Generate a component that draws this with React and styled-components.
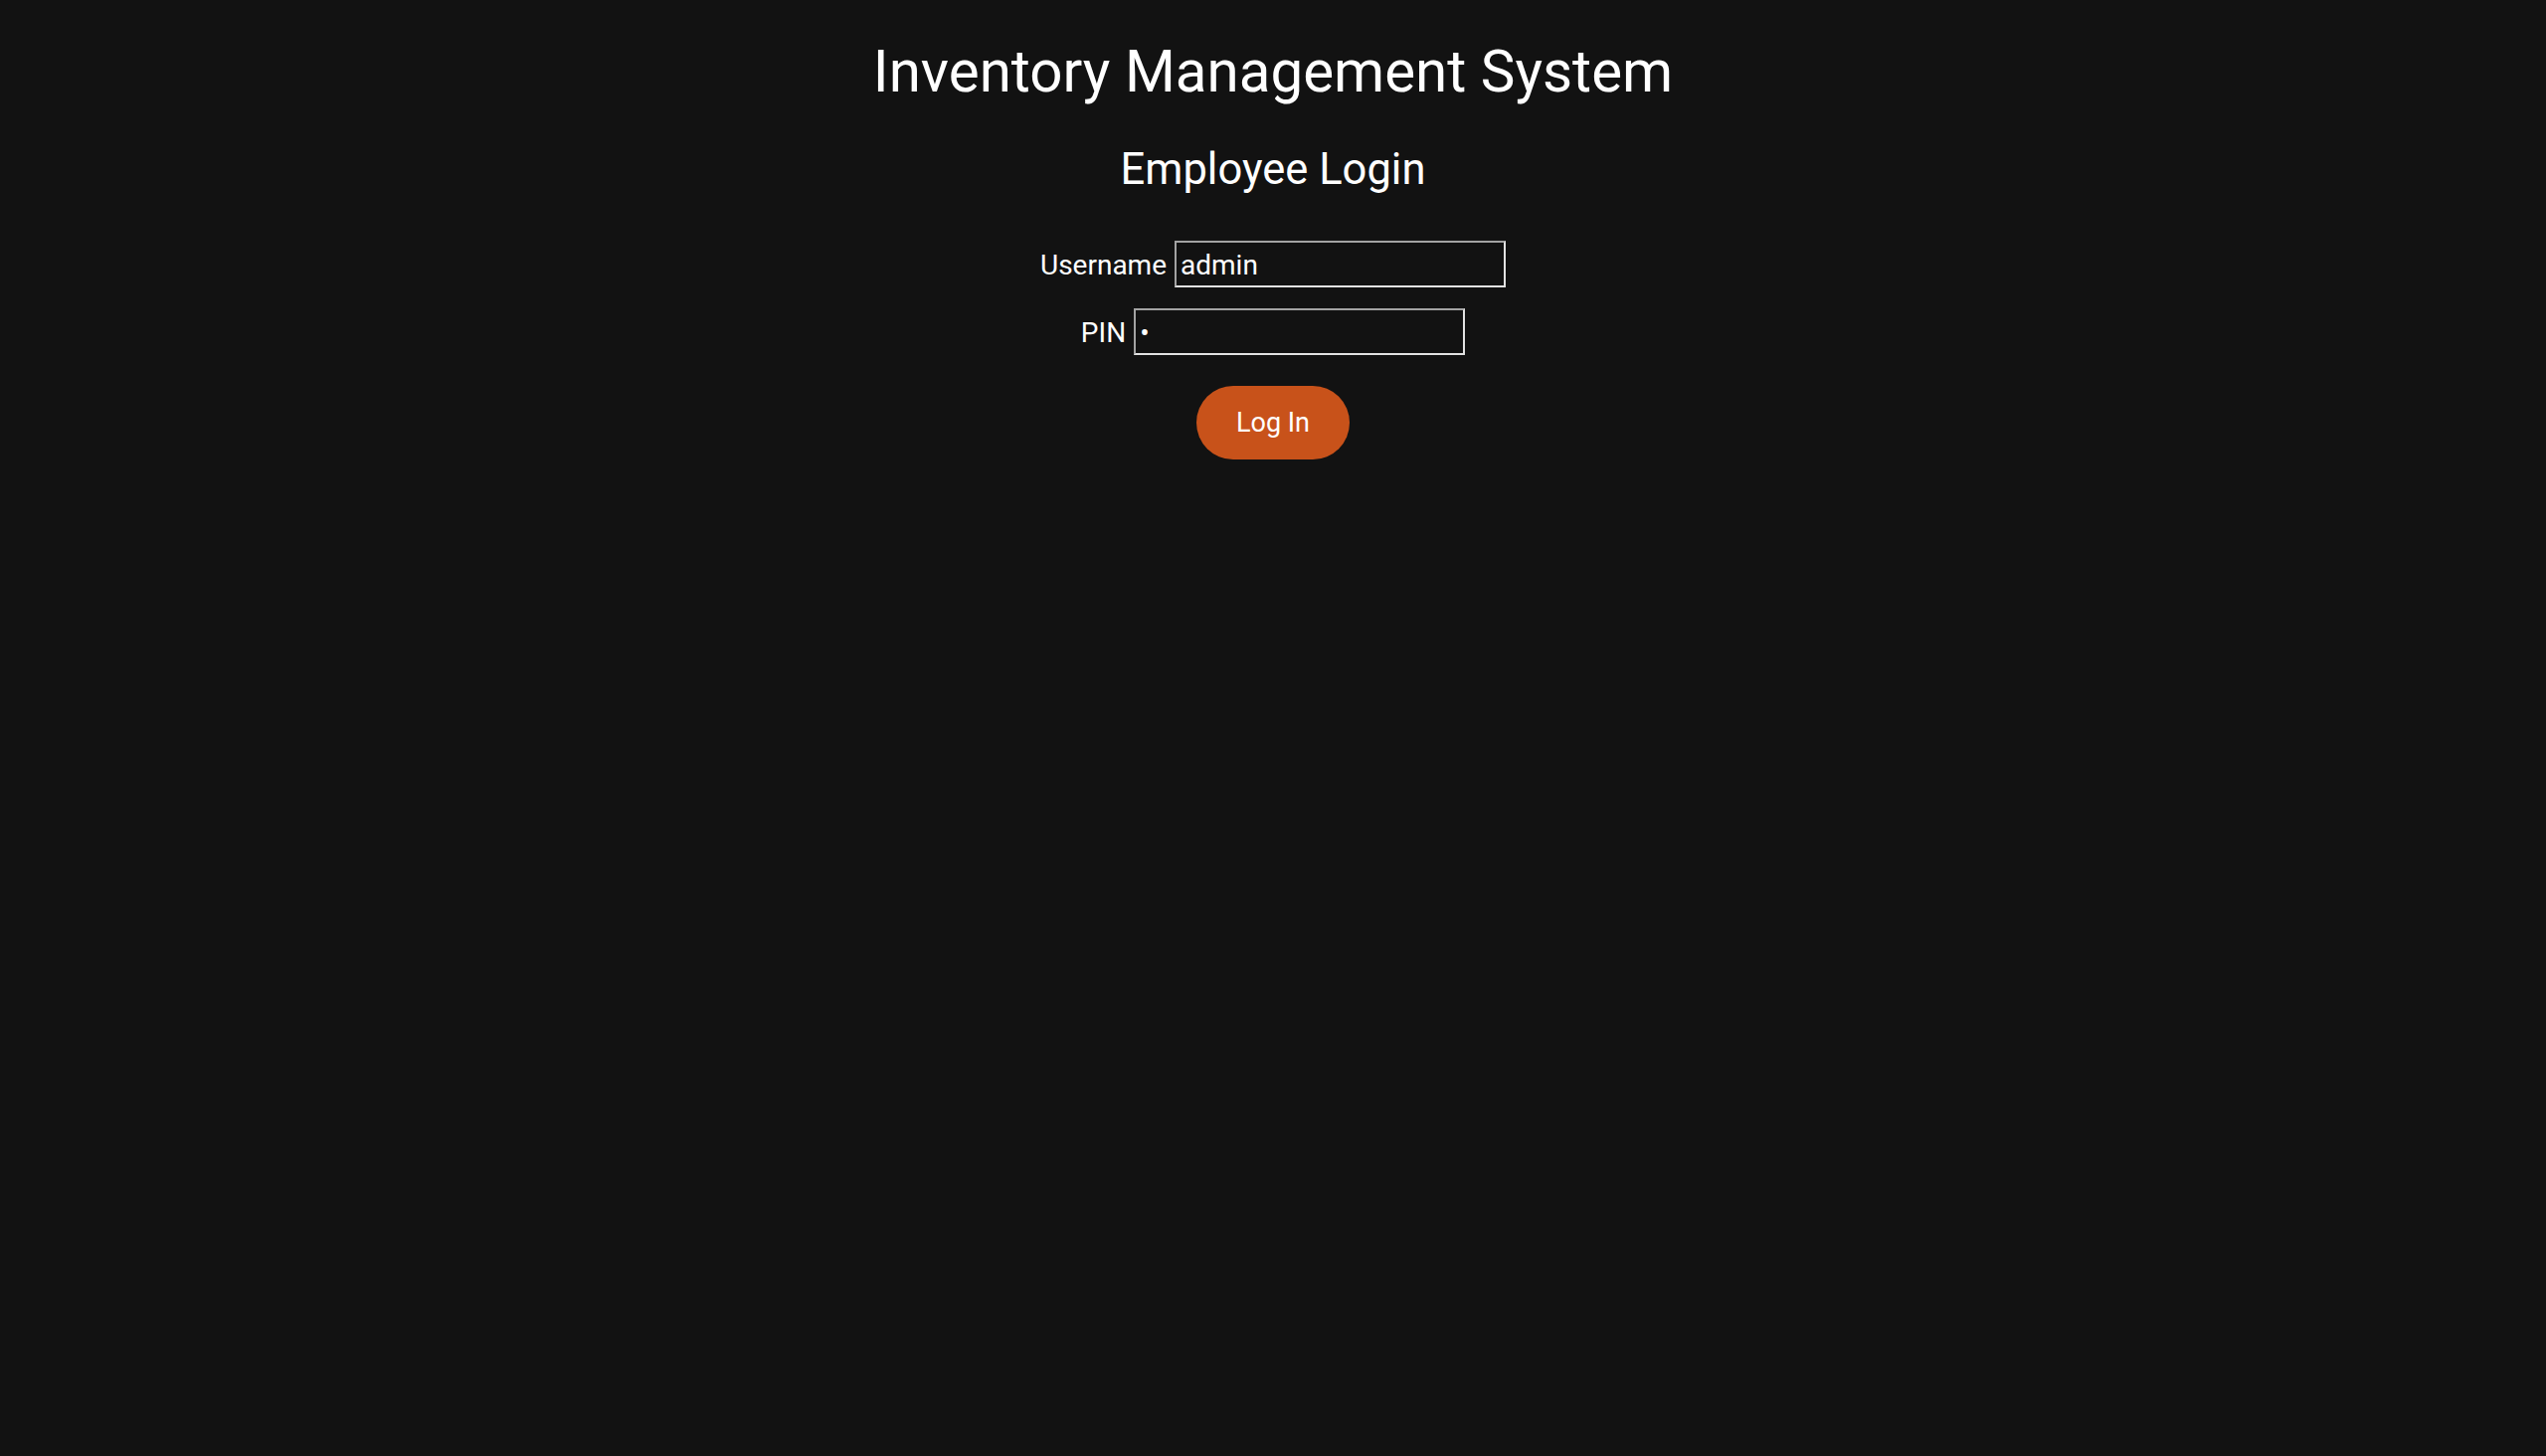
import React, { useState } from "react";
import styled, { createGlobalStyle } from "styled-components";

const GlobalStyle = createGlobalStyle`
  html, body {
    margin: 0;
    padding: 0;
    background: #121212;
  }
  body {
    font-family: Roboto, "Liberation Sans", sans-serif;
    color: #ffffff;
  }
`;

const Page = styled.main`
  min-height: 100vh;
  box-sizing: border-box;
  padding-top: 38px;
  display: flex;
  flex-direction: column;
  align-items: center;
  background: #121212;
`;

const Title = styled.h1`
  margin: 0;
  font-size: 58.3px;
  font-weight: 400;
  line-height: normal;
  color: #ffffff;
`;

const Subtitle = styled.h2`
  margin: 39px 0 0;
  font-size: 43.5px;
  font-weight: 400;
  line-height: normal;
  color: #ffffff;
`;

const Form = styled.form`
  margin-top: 46px;
  display: flex;
  flex-direction: column;
  align-items: center;
  gap: 21px;
`;

const Row = styled.div`
  display: flex;
  align-items: baseline;
  justify-content: center;
  gap: 8px;
`;

const Label = styled.label`
  font-size: 28px;
  color: #ffffff;
`;

const Input = styled.input`
  box-sizing: border-box;
  width: 333px;
  height: 47px;
  padding: 1px 4px 0;
  font-family: Roboto, "Liberation Sans", sans-serif;
  font-size: 28px;
  color: #ffffff;
  background: transparent;
  border-width: 2px;
  border-style: solid;
  border-color: #a3a3a3 #e2e2e2 #e2e2e2 #a3a3a3;
  border-radius: 0;
  outline: none;
`;

const Button = styled.button`
  margin-top: 10px;
  width: 154px;
  height: 74px;
  padding: 0;
  border: none;
  border-radius: 37px;
  background: #c8521a;
  color: #ffffff;
  font-family: Roboto, "Liberation Sans", sans-serif;
  font-size: 27px;
  cursor: pointer;
`;

export default function App() {
  const [username, setUsername] = useState("admin");
  const [pin, setPin] = useState("1");
  return (
    <>
      <GlobalStyle />
      <Page>
        <Title>Inventory Management System</Title>
        <Subtitle>Employee Login</Subtitle>
        <Form onSubmit={(e) => e.preventDefault()}>
          <Row>
            <Label htmlFor="username">Username</Label>
            <Input
              id="username"
              type="text"
              value={username}
              onChange={(e) => setUsername(e.target.value)}
            />
          </Row>
          <Row>
            <Label htmlFor="pin">PIN</Label>
            <Input
              id="pin"
              type="password"
              value={pin}
              onChange={(e) => setPin(e.target.value)}
            />
          </Row>
          <Button type="submit">Log In</Button>
        </Form>
      </Page>
    </>
  );
}
